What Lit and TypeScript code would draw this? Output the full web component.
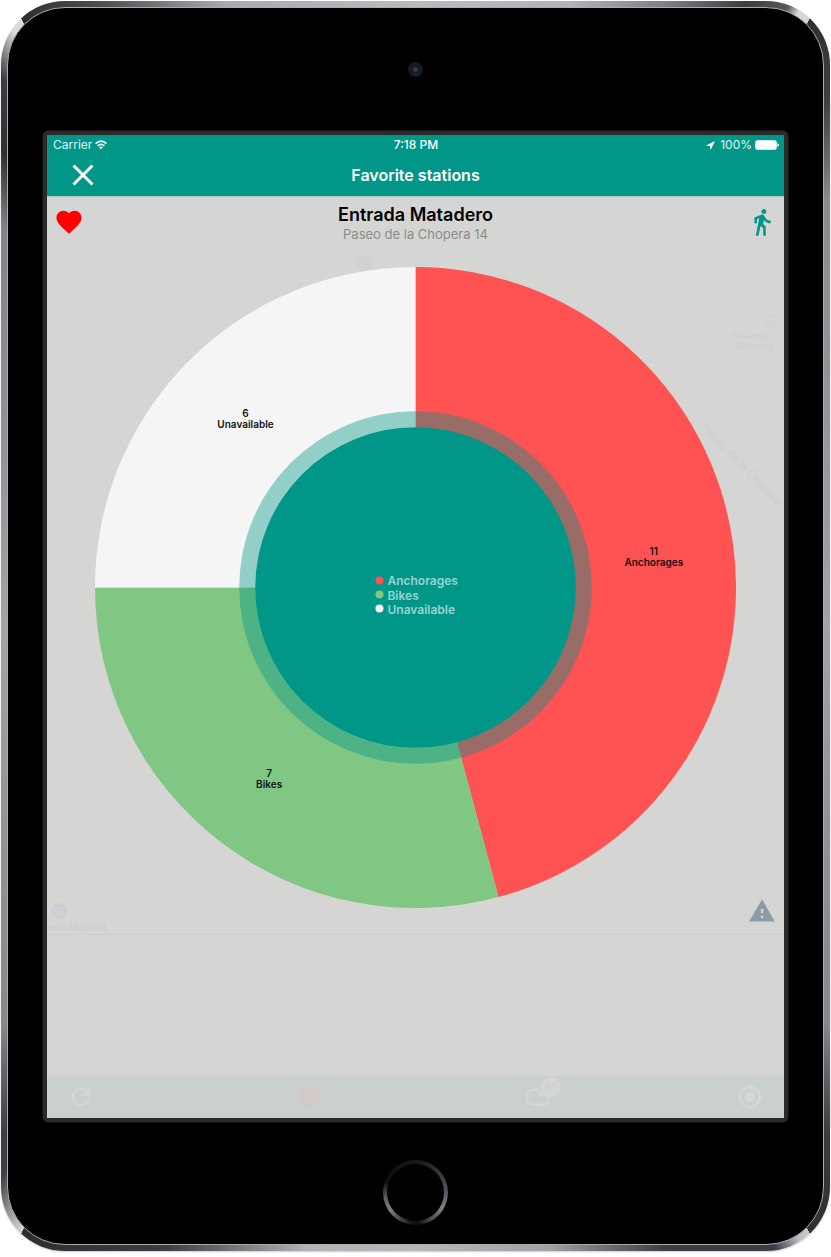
import { LitElement, html, svg, css } from "lit";
import { customElement, property } from "lit/decorators.js";

interface Slice {
  label: string;
  value: number;
  color: string;
}

const HEART =
  "M12 21.35l-1.45-1.32C5.4 15.36 2 12.28 2 8.5 2 5.42 4.42 3 7.5 3c1.74 0 3.41.81 4.5 2.09C13.09 3.81 14.76 3 16.5 3 19.58 3 22 5.42 22 8.5c0 3.78-3.4 6.86-8.55 11.54L12 21.35z";

@customElement("station-chart")
export class StationChart extends LitElement {
  @property({ attribute: false }) slices: Slice[] = [];

  static styles = css`
    :host {
      display: block;
    }
    .chart {
      display: block;
      width: 100%;
      height: auto;
    }
    .value {
      font: 600 10px Inter, "Liberation Sans", sans-serif;
      fill: #111;
      text-anchor: middle;
    }
    .legend {
      font: 600 12px Inter, "Liberation Sans", sans-serif;
      fill: #fff;
      fill-opacity: 0.6;
    }
  `;

  private point(angle: number, radius: number) {
    return [320 + radius * Math.sin(angle), 320 - radius * Math.cos(angle)];
  }

  render() {
    const total = this.slices.reduce((sum, s) => sum + s.value, 0);
    let start = 0;
    return html`<svg class="chart" viewBox="0 0 640 640" role="img" aria-label="Station availability">
      ${this.slices.map((s) => {
        const end = start + (s.value / total) * Math.PI * 2;
        const [x1, y1] = this.point(start, 320);
        const [x2, y2] = this.point(end, 320);
        const [tx, ty] = this.point((start + end) / 2, 240);
        const large = end - start > Math.PI ? 1 : 0;
        start = end;
        return svg`<path d="M320 320L${x1} ${y1}A320 320 0 ${large} 1 ${x2} ${y2}Z" fill=${s.color} />
          <text class="value" x=${tx} y=${ty - 1}>${s.value}</text>
          <text class="value" x=${tx} y=${ty + 10}>${s.label}</text>`;
      })}
      <circle cx="320" cy="320" r="176" fill="#009688" fill-opacity="0.4" />
      <circle cx="320" cy="320" r="160" fill="#009688" />
      ${this.slices.map(
        (s, i) => svg`<circle cx="284" cy=${313 + i * 14} r="4" fill=${s.color} />
          <text class="legend" x="292" y=${318 + i * 14}>${s.label}</text>`
      )}
    </svg>`;
  }
}

@customElement("app-root")
export class AppRoot extends LitElement {
  private slices: Slice[] = [
    { label: "Anchorages", value: 11, color: "#ff5252" },
    { label: "Bikes", value: 7, color: "#81c784" },
    { label: "Unavailable", value: 6, color: "#f5f5f5" },
  ];

  static styles = css`
    :host {
      display: block;
      padding: 1px 1px 6px;
      background: #fff;
      font-family: Inter, "Liberation Sans", sans-serif;
    }
    button {
      display: block;
      padding: 0;
      border: 0;
      background: none;
      color: inherit;
      cursor: pointer;
    }
    svg {
      display: block;
    }
    .device {
      padding: 6px;
      border-radius: 64px;
      box-shadow: 0 1px 2px rgba(0, 0, 0, 0.2);
      background: conic-gradient(
        #b8bcbf 0deg,
        #b0b4b8 14deg,
        #7c8084 22deg,
        #3a3d40 28deg,
        #55585b 31deg,
        #d8dadc 32deg,
        #d0d2d4 33deg,
        #2c2f32 33deg,
        #3c4043 38deg,
        #8a8d90 44deg,
        #a0a3a8 90deg,
        #85888c 134deg,
        #3a3d40 141deg,
        #2c2f32 147deg,
        #c8cacd 147deg,
        #b8babd 148deg,
        #3a3e42 150deg,
        #3a3e42 158deg,
        #a0a4a7 168deg,
        #b4b8bb 180deg,
        #b0b4b7 190deg,
        #3a3e42 202deg,
        #2c2f32 213deg,
        #d4d8da 213deg,
        #b0b4b7 214deg,
        #3a3e42 217deg,
        #3a3e42 219deg,
        #85898c 226deg,
        #a0a5a8 270deg,
        #7f8588 314deg,
        #2c3033 319deg,
        #3a3e42 323deg,
        #d8dcde 326deg,
        #d8dcde 327deg,
        #2c2f32 327deg,
        #4a4d50 333deg,
        #a8acb0 343deg,
        #b8bcbf 360deg
      );
    }
    .glass {
      padding: 0 35px;
      border: 1px solid #a9acaf;
      border-radius: 58px;
      background: #000;
    }
    .forehead {
      display: grid;
      place-items: center;
      height: 123px;
    }
    .camera {
      width: 5px;
      height: 5px;
      border: 5px solid #1b1b1d;
      border-radius: 50%;
      background: #173a86;
    }
    .chin {
      display: grid;
      place-items: center;
      height: 122px;
      padding-top: 18px;
      box-sizing: border-box;
    }
    .home {
      width: 65px;
      height: 65px;
      border-radius: 50%;
      padding: 4px;
      background: conic-gradient(#15191c, #24282c 30deg, #4a4e52 80deg, #7d8185 120deg, #4a4e52 150deg, #0d1013 175deg, #15191c 190deg, #7d8185 235deg, #5a5e62 260deg, #0b0e11 290deg, #15191c);
    }
    .home-face {
      display: block;
      height: 57px;
      border-radius: 50%;
      background: #000;
    }
    .bezel {
      border: 4px solid #2a2a2a;
      border-radius: 5px;
      box-shadow: 0 0 0 1px #111;
    }
    .screen {
      display: flex;
      flex-direction: column;
      background: #d5d5d3;
    }
    .top {
      height: 61px;
      background: #009688;
      color: #fff;
      border-bottom: 1px solid #a9c4bf;
    }
    .status {
      display: grid;
      grid-template-columns: 1fr auto 1fr;
      align-items: center;
      height: 20px;
      padding: 0 5px 0 6px;
      font-size: 12px;
      line-height: 20px;
    }
    .carrier,
    .power {
      display: flex;
      align-items: center;
      gap: 3px;
      color: #e0f4f1;
    }
    .power {
      justify-content: flex-end;
    }
    .location {
      margin-right: 2px;
    }
    .clock {
      font-weight: 500;
    }
    .nav {
      display: grid;
      grid-template-columns: 40px 1fr 40px;
      align-items: center;
      height: 40px;
      padding: 0 16px;
    }
    .close {
      justify-self: center;
    }
    .nav-title {
      margin: 0;
      text-align: center;
      font-size: 16px;
      line-height: 20px;
      font-weight: 600;
    }
    .body {
      display: grid;
      grid-template-rows: auto minmax(141px, 1fr) 42px;
      position: relative;
    }
    .map {
      position: absolute;
      inset: 0;
      width: 100%;
      height: 100%;
    }
    .map-label {
      font: 600 9px Inter, "Liberation Sans", sans-serif;
      fill: #d0d0d2;
    }
    .station-label {
      font: 600 11px Inter, "Liberation Sans", sans-serif;
      fill: #cdced3;
    }
    .street-label {
      font: 11px Inter, "Liberation Sans", sans-serif;
      fill: #cecece;
    }
    .card {
      position: relative;
      border-bottom: 1px solid #cdcdcb;
    }
    .head {
      display: grid;
      grid-template-columns: 30px 1fr 30px;
      align-items: start;
      padding: 8px 7px 0;
    }
    .favorite,
    .walk {
      margin-top: 2px;
    }
    .names {
      text-align: center;
    }
    .name {
      margin: 0;
      font-size: 18px;
      line-height: 20px;
      font-weight: 600;
      color: #000;
    }
    .address {
      margin: 0;
      font-size: 13px;
      line-height: 18px;
      color: #8c8c8c;
    }
    .chart-area {
      padding: 24px 48px 26px;
    }
    .report {
      position: absolute;
      right: 8px;
      bottom: 9px;
    }
    .tabs {
      position: relative;
      grid-row: 3;
      display: flex;
      justify-content: space-between;
      align-items: center;
      padding: 0 20px;
      background: #cad0cf;
      color: #d5d8d7;
    }
    .weather {
      position: relative;
      margin-right: -16px;
    }
    .badge {
      position: absolute;
      left: 17px;
      top: -6px;
      width: 20px;
      height: 20px;
      border-radius: 50%;
      background: #d4d6d6;
      color: #c9cdcd;
      font: 11px/20px Inter, "Liberation Sans", sans-serif;
    }
  `;

  render() {
    return html`
      <div class="device">
        <div class="glass">
          <div class="forehead"><span class="camera"></span></div>
          <div class="bezel">
            <main class="screen">
              <header class="top">
                <div class="status">
                  <span class="carrier">
                    Carrier
                    <svg width="12" height="10" viewBox="0 0 12 10" fill="none" stroke="#fff" stroke-width="1.6">
                      <path d="M.6 3.6Q6-1.4 11.4 3.6M2.6 5.9Q6 2.8 9.4 5.9" />
                      <path d="M6 9.2L4 7.2Q6 5.6 8 7.2Z" fill="#fff" stroke="none" />
                    </svg>
                  </span>
                  <span class="clock">7:18 PM</span>
                  <span class="power">
                    <svg class="location" width="9" height="9" viewBox="0 0 9 9"><path d="M9 0L0 4.4l4 .6.600 4z" fill="#fff" /></svg>
                    100%
                    <svg width="24" height="10" viewBox="0 0 24 10">
                      <rect x=".5" y=".5" width="21" height="9" rx="2" fill="#fff" stroke="#c9eae6" />
                      <path d="M22.4 3.2Q24 3.6 24 5T22.4 6.8Z" fill="#fff" />
                    </svg>
                  </span>
                </div>
                <div class="nav">
                  <button class="close" aria-label="Close">
                    <svg width="22" height="22" viewBox="0 0 22 22" stroke="#fff" stroke-width="3"><path d="M1.5 1.5l19 19M20.5 1.5l-19 19" /></svg>
                  </button>
                  <h1 class="nav-title">Favorite stations</h1>
                </div>
              </header>
              <div class="body">
                <svg class="map" viewBox="0 0 737 921" preserveAspectRatio="xMinYMin slice" aria-hidden="true">
                  <g fill="none" stroke="#d0d1d0" stroke-width="1">
                    <path d="M468 3L561 92L653 3M683 3L585 113L737 265M383 3L463 83M675 288L711 323" />
                  </g>
                  <circle cx="317" cy="66" r="8" fill="#d1d1d2" />
                  <path d="M314 63v4q3 4 6 0v-4" stroke="#d5d5d3" fill="none" />
                  <circle cx="724" cy="124" r="5" fill="none" stroke="#d1d1d2" stroke-width="2" />
                  <text class="map-label" x="685" y="142">Eduardo D</text>
                  <text class="map-label" x="688" y="152">Cabadas</text>
                  <text class="street-label" transform="translate(654 232) rotate(45)">Paseo de la Chopera</text>
                  <circle cx="12" cy="714" r="8" fill="#cdced3" />
                  <path d="M8 711h8M7 714h10M8 717h8" stroke="#d5d5d3" fill="none" />
                  <text class="station-label" x="1" y="734">ero Madrid</text>
                </svg>
                <section class="card">
                  <div class="head">
                    <button class="favorite" aria-label="Remove from favorites">
                      <svg width="30" height="30" viewBox="0 0 24 24"><path d=${HEART} fill="#f00" /></svg>
                    </button>
                    <div class="names">
                      <h2 class="name">Entrada Matadero</h2>
                      <p class="address">Paseo de la Chopera 14</p>
                    </div>
                    <button class="walk" aria-label="Walk to station">
                      <svg width="30" height="30" viewBox="0 0 24 24">
                        <path d="M13.5 5.5c1.1 0 2-.9 2-2s-.9-2-2-2-2 .9-2 2 .9 2 2 2zM9.8 8.9L7 23h2.1l1.800-8 2.100 2v6h2v-7.500l-2.100-2 .6-3C14.800 12 16.800 13 19 13v-2c-1.900 0-3.500-1-4.300-2.400l-1-1.600c-.4-.6-1-1-1.700-1-.3 0-.5.1-.8.1L6 8.300V13h2V9.600l1.800-.7" fill="#009688" />
                      </svg>
                    </button>
                  </div>
                  <div class="chart-area">
                    <station-chart .slices=${this.slices}></station-chart>
                  </div>
                  <button class="report" aria-label="Report a problem">
                    <svg width="28" height="28" viewBox="0 0 24 24"><path d="M1 21h22L12 2 1 21zm12-3h-2v-2h2v2zm0-4h-2v-4h2v4z" fill="#8a9ba7" /></svg>
                  </button>
                </section>
                <nav class="tabs">
                  <button aria-label="Refresh">
                    <svg width="28" height="28" viewBox="0 0 24 24" fill="currentColor"><path d="M17.650 6.350C16.200 4.900 14.210 4 12 4c-4.420 0-7.990 3.580-7.990 8s3.570 8 7.990 8c3.730 0 6.840-2.550 7.730-6h-2.080c-.82 2.330-3.040 4-5.650 4-3.310 0-6-2.690-6-6s2.690-6 6-6c1.660 0 3.140.69 4.220 1.780L13 11h7V4l-2.350 2.350z" /></svg>
                  </button>
                  <button aria-label="Favorites">
                    <svg width="29" height="29" viewBox="0 0 24 24"><path d=${HEART} fill="#d5c9c8" /></svg>
                  </button>
                  <button class="weather" aria-label="Weather">
                    <svg width="28" height="28" viewBox="0 0 28 28" fill="none" stroke="currentColor" stroke-width="2">
                      <path d="M9 21.500C5 21.500 3 19 3 15.500C3 10 6 6.500 10.500 6.500C14 6.500 16 9 17 11.500C21.500 11 24.500 13.500 24.500 16.500C24.500 19.500 22.500 21.500 20 21.500Z" />
                    </svg>
                    <span class="badge">8º</span>
                  </button>
                  <button aria-label="My location">
                    <svg width="28" height="28" viewBox="0 0 24 24" fill="none" stroke="currentColor" stroke-width="2">
                      <circle cx="12" cy="12" r="8.500" />
                      <circle cx="12" cy="12" r="4.300" fill="currentColor" stroke="none" />
                      <path d="M12 1v3M12 20v3M1 12h3M20 12h3" />
                    </svg>
                  </button>
                </nav>
              </div>
            </main>
          </div>
          <div class="chin"><button class="home" aria-label="Home"><span class="home-face"></span></button></div>
        </div>
      </div>
    `;
  }
}
